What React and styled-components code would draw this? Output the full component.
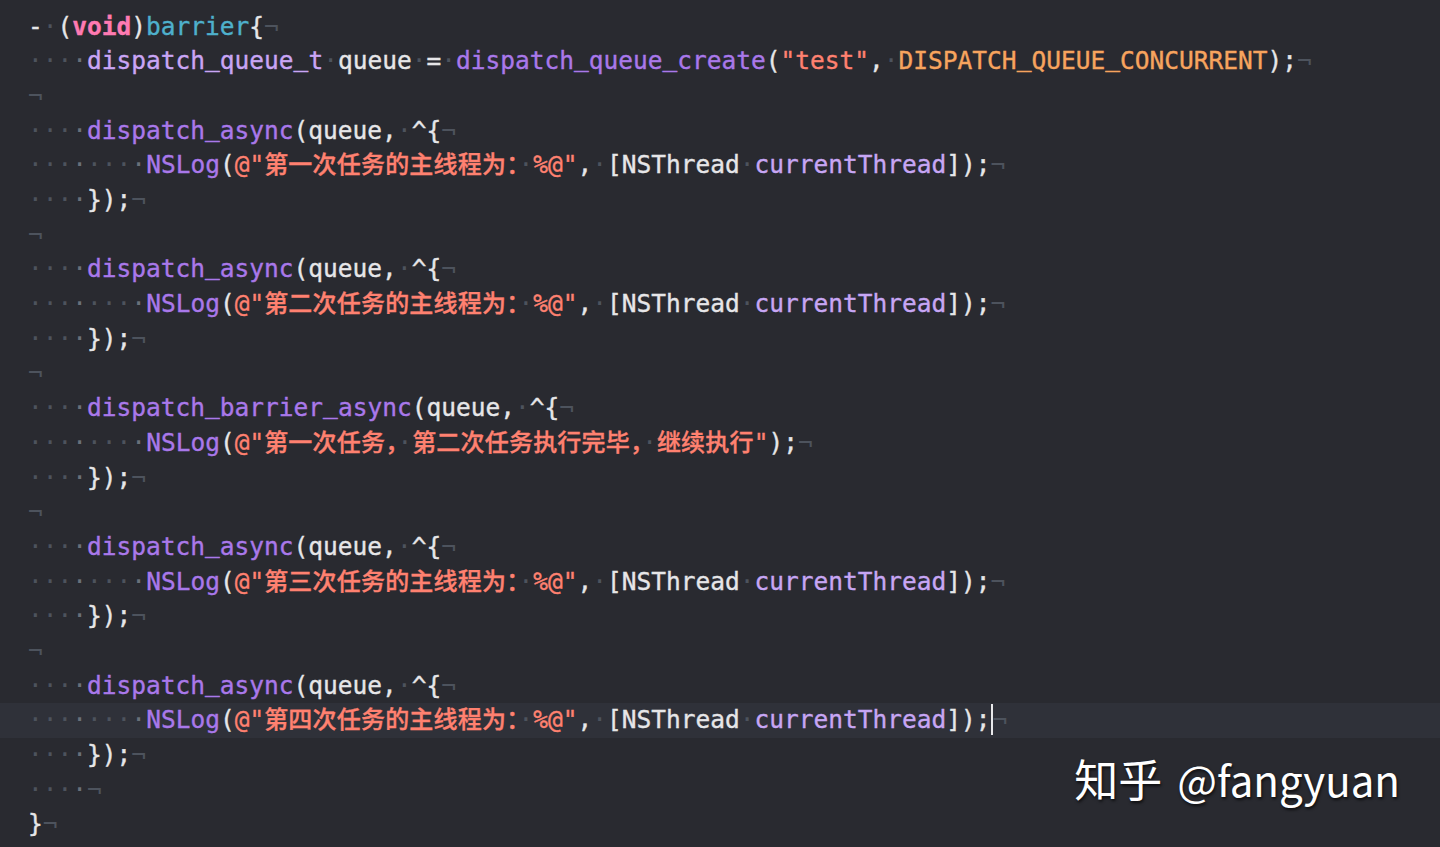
import React from "react";
import styled, { createGlobalStyle } from "styled-components";

const Global = createGlobalStyle`
  html, body { margin: 0; padding: 0; background: #292a30; }
  #root { min-height: 847px; }
`;

const COLORS = {
  plain: "#e6e6e8",
  kw: "#ff7ab2",
  decl: "#4eb0cc",
  fn: "#a978ea",
  method: "#c7a6f4",
  type: "#c9a5f5",
  str: "#ff8170",
  macro: "#f7a45e",
};

const Editor = styled.div`
  position: relative;
  width: 1440px;
  height: 847px;
  overflow: hidden;
  background: #292a30;
  padding-top: 9.6px;
  box-sizing: border-box;
  font-family: "DejaVu Sans Mono", "Liberation Mono", monospace;
  font-size: 24.5px;
  -webkit-text-stroke: 0.35px currentColor;
`;

const Line = styled.div`
  height: 34.7px;
  line-height: 34.7px;
  padding-left: 28px;
  white-space: pre;
  color: ${COLORS.plain};
  background: ${(p) => (p.$active ? "#2f3139" : "transparent")};
`;

const Tok = styled.span`
  color: ${(p) => COLORS[p.$kind] || COLORS.plain};
  font-weight: ${(p) => (p.$kind === "kw" ? 700 : 400)};
`;

const Under = styled.span`
  line-height: 0;
  vertical-align: 3px;
`;

const Cjk = styled.span`
  font-family: "Noto Sans CJK SC", sans-serif;
  font-size: 24px;
  font-weight: 500;
  letter-spacing: 0.2px;
  line-height: 1;
`;

const Dot = styled.span`
  color: ${(p) => (p.$strong ? "#6a707a" : "#4d535d")};
  -webkit-text-stroke: 0;
`;

const Eol = styled.span`
  color: #4d535d;
  -webkit-text-stroke: 0;
`;

const Caret = styled.span`
  display: inline-block;
  width: 2px;
  height: 31px;
  vertical-align: middle;
  background: #e8e8ea;
  margin-top: -4px;
`;

const Watermark = styled.div`
  position: absolute;
  right: 40px;
  top: 750px;
  display: flex;
  align-items: baseline;
  gap: 15px;
  line-height: 56px;
  color: #ffffff;
  white-space: pre;
  -webkit-text-stroke: 0;
  text-shadow: 1px 2px 3px rgba(0, 0, 0, 0.7);
`;

const MarkCjk = styled.span`
  font-family: "Noto Sans CJK SC", sans-serif;
  font-size: 44px;
`;

const MarkHandle = styled.span`
  font-family: "Noto Sans CJK SC", "Noto Sans", sans-serif;
  font-size: 42px;
`;

const CJK_CLASS = "[\\u3000-\\u303f\\u4e00-\\u9fff\\uff00-\\uffef]";
const SPLIT_RE = new RegExp(`(${CJK_CLASS}+| |_)`);
const CJK_TEST = new RegExp(CJK_CLASS);

function renderText(kind, text, key) {
  const parts = text.split(SPLIT_RE).filter((s) => s !== "");
  return (
    <Tok key={key} $kind={kind}>
      {parts.map((p, i) => {
        if (p === " ") return <Dot key={i}>·</Dot>;
        if (p === "_") return <Under key={i}>_</Under>;
        if (CJK_TEST.test(p)) return <Cjk key={i}>{p}</Cjk>;
        return <React.Fragment key={i}>{p}</React.Fragment>;
      })}
    </Tok>
  );
}

const I4 = ["indent", 4];
const I8 = ["indent", 8];

const block = (fn, msg) => [
  [I4, ["fn", fn], ["plain", "(queue, ^{"]],
  msg,
  [I4, ["plain", "});"]],
];

const logLine = (msg) => [
  I8,
  ["fn", "NSLog"],
  ["plain", "("],
  ["str", `@"${msg} %@"`],
  ["plain", ", [NSThread "],
  ["method", "currentThread"],
  ["plain", "]);"],
];

const LINES = [
  [["plain", "- ("], ["kw", "void"], ["plain", ")"], ["decl", "barrier"], ["plain", "{"]],
  [
    I4,
    ["type", "dispatch_queue_t"],
    ["plain", " queue = "],
    ["fn", "dispatch_queue_create"],
    ["plain", "("],
    ["str", '"test"'],
    ["plain", ", "],
    ["macro", "DISPATCH_QUEUE_CONCURRENT"],
    ["plain", ");"],
  ],
  [],
  ...block("dispatch_async", logLine("第一次任务的主线程为：")),
  [],
  ...block("dispatch_async", logLine("第二次任务的主线程为：")),
  [],
  ...block("dispatch_barrier_async", [
    I8,
    ["fn", "NSLog"],
    ["plain", "("],
    ["str", '@"第一次任务， 第二次任务执行完毕， 继续执行"'],
    ["plain", ");"],
  ]),
  [],
  ...block("dispatch_async", logLine("第三次任务的主线程为：")),
  [],
  ...block("dispatch_async", [...logLine("第四次任务的主线程为："), ["caret"]]),
  [I4],
  [["plain", "}"]],
];

const ACTIVE = 20;

export default function App() {
  return (
    <>
      <Global />
      <Editor>
        {LINES.map((toks, li) => (
          <Line key={li} $active={li === ACTIVE}>
            {toks.map((t, ti) => {
              if (t[0] === "indent") {
                return Array.from({ length: t[1] }, (_, i) => (
                  <Dot key={`${ti}-${i}`} $strong={i % 4 === 3}>
                    ·
                  </Dot>
                ));
              }
              if (t[0] === "caret") return <Caret key={ti} />;
              return renderText(t[0], t[1], ti);
            })}
            <Eol>¬</Eol>
          </Line>
        ))}
        <Watermark>
          <MarkCjk>知乎</MarkCjk>
          <MarkHandle>@fangyuan</MarkHandle>
        </Watermark>
      </Editor>
    </>
  );
}
